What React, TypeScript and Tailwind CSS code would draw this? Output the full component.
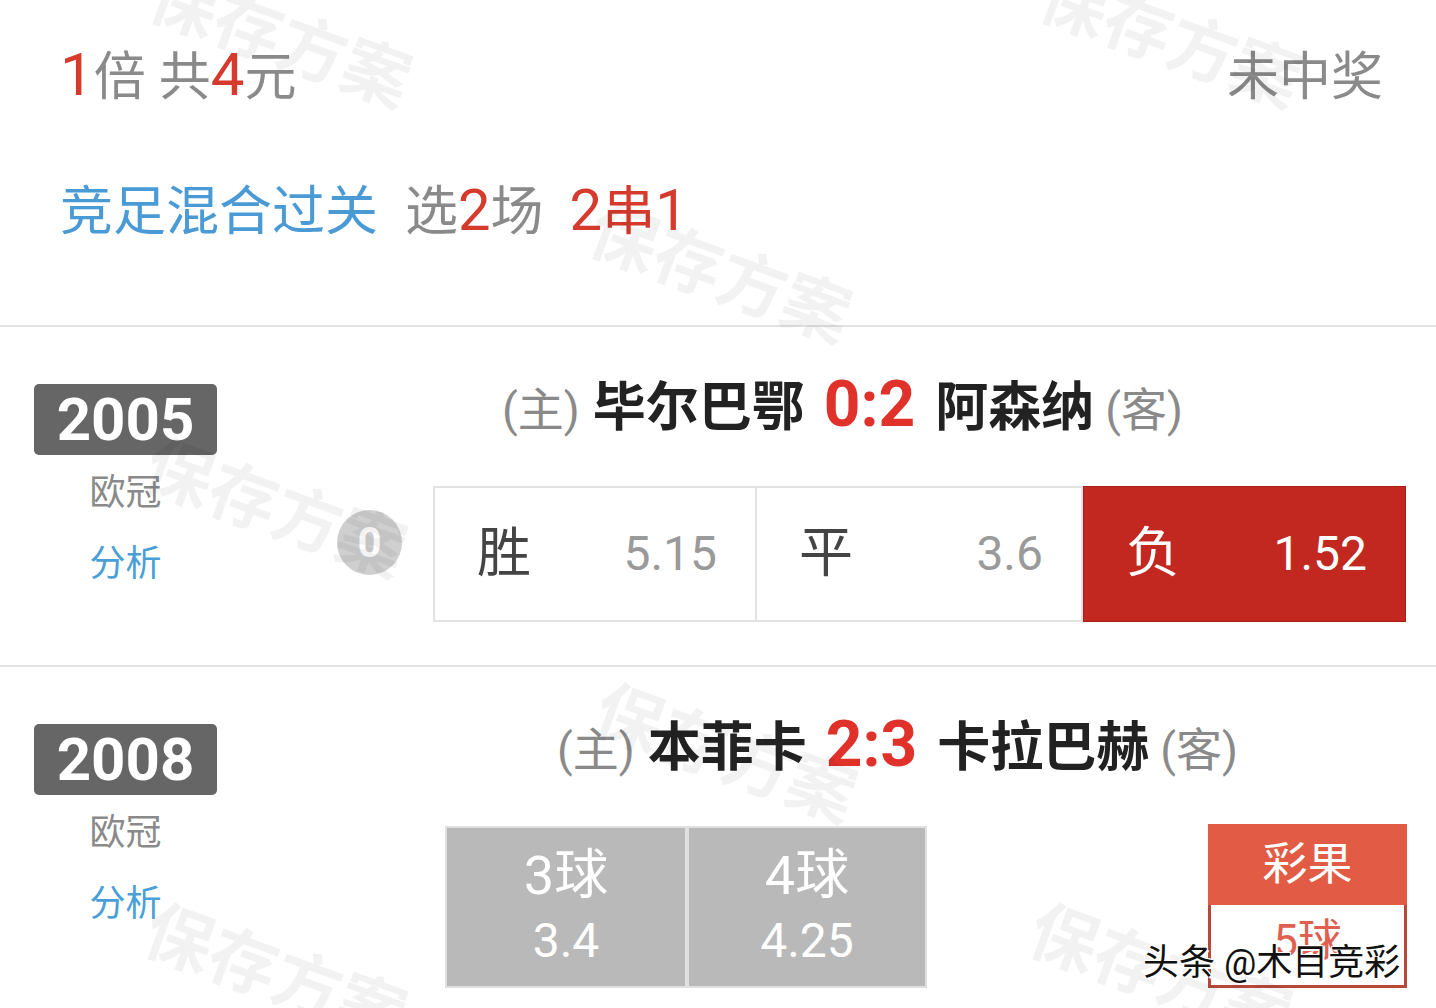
import React from 'react';

interface MatchProps {
  no: string;
  home: string;
  away: string;
  score: string;
}

function MatchInfo({ no }: { no: string }) {
  return (
    <div className="flex w-[183px] shrink-0 flex-col items-center pt-[57px]">
      <div className="flex h-[71px] w-[183px] items-center justify-center rounded-[5px] bg-[#666666] text-[60px] font-bold leading-none text-white">
        {no}
      </div>
      <div className="mt-[20px] text-[36px] leading-none text-[#8a8a8a]">欧冠</div>
      <div className="mt-[35px] text-[36px] leading-none text-[#4a9fd8]">分析</div>
    </div>
  );
}

function Teams({ home, away, score }: Omit<MatchProps, 'no'>) {
  return (
    <div className="flex items-baseline leading-none">
      <span className="text-[46px] text-[#8a8a8a]">(主)</span>
      <span className="ml-[13px] text-[53px] font-bold text-[#222222]">{home}</span>
      <span className="ml-[19px] text-[64px] font-bold text-[#e0322a]">{score}</span>
      <span className="ml-[20px] text-[53px] font-bold text-[#222222]">{away}</span>
      <span className="ml-[11px] text-[46px] text-[#8a8a8a]">(客)</span>
    </div>
  );
}

function OddsCell({ label, odds, className }: { label: string; odds: string; className: string }) {
  return (
    <div className={`flex items-center justify-between pl-[42px] pr-[38px] leading-none ${className}`}>
      <span className="text-[54px]">{label}</span>
      <span className="text-[48px]">{odds}</span>
    </div>
  );
}

function Watermark({ className }: { className: string }) {
  return (
    <span
      className={`pointer-events-none absolute rotate-[20deg] select-none whitespace-nowrap text-[68px] font-bold leading-none text-black/[0.05] ${className}`}
    >
      保存方案
    </span>
  );
}

export default function App() {
  return (
    <div className="relative h-[1008px] w-[1436px] overflow-hidden bg-white font-[family-name:Roboto,'Noto_Sans_CJK_SC',sans-serif]">
      {/* plan summary */}
      <div className="h-[325px] pl-[60px] pr-[53px] pt-[45px]">
        <div className="flex items-baseline justify-between leading-none">
          <span className="text-[52px] text-[#8a8a8a]">
            <span className="text-[60px] text-[#d63a2c]">1</span>倍 共<span className="text-[60px] text-[#d63a2c]">4</span>元
          </span>
          <span className="text-[52px] text-[#8a8a8a]">未中奖</span>
        </div>
        <div className="mt-[76px] flex items-baseline text-[53px] leading-none">
          <span className="text-[#4a9ad6]">竞足混合过关</span>
          <span className="ml-[27px] text-[#8a8a8a]">
            选<span className="text-[58px] text-[#d63a2c]">2</span>场
          </span>
          <span className="ml-[26px] text-[#d63a2c]">
            <span className="text-[58px]">2</span>串<span className="text-[58px]">1</span>
          </span>
        </div>
      </div>
      <div className="h-[2px] bg-[#e2e2e2]" />

      {/* match 2005 */}
      <div className="flex h-[338px] pl-[34px]">
        <MatchInfo no="2005" />
        <div className="flex flex-1 flex-col pt-[46px]">
          <div className="ml-[285px]">
            <Teams home="毕尔巴鄂" score="0:2" away="阿森纳" />
          </div>
          <div className="mt-[49px] flex items-start">
            <div className="ml-[120px] mt-[24px] flex h-[65px] w-[65px] items-center justify-center rounded-full bg-[#cfcfcf] text-[42px] font-bold leading-none text-white">
              0
            </div>
            <div className="ml-[31px] flex h-[136px] w-[973px] border-2 border-[#e3e3e3] bg-white">
              <OddsCell label="胜" odds="5.15" className="w-[322px] border-r-2 border-[#e3e3e3] text-[#444444] [&>span:last-child]:text-[#9a9a9a]" />
              <OddsCell label="平" odds="3.6" className="w-[326px] border-r-2 border-[#e3e3e3] text-[#444444] [&>span:last-child]:text-[#9a9a9a]" />
              <OddsCell label="负" odds="1.52" className="-my-[2px] -mr-[2px] flex-1 border border-[#a91f18] bg-[#c2281f] text-white" />
            </div>
          </div>
        </div>
      </div>
      <div className="h-[2px] bg-[#e2e2e2]" />

      {/* match 2008 */}
      <div className="flex h-[341px] pl-[34px]">
        <MatchInfo no="2008" />
        <div className="flex flex-1 flex-col pt-[46px]">
          <div className="ml-[340px]">
            <Teams home="本菲卡" score="2:3" away="卡拉巴赫" />
          </div>
          <div className="mt-[49px] flex items-start pr-[29px]">
            <div className="ml-[228px] flex h-[162px] w-[242px] flex-col items-center justify-center border-2 border-[#e0e0e0] bg-[#b9b9b9] leading-none text-white">
              <span className="text-[54px]">3球</span>
              <span className="mt-[14px] text-[48px]">3.4</span>
            </div>
            <div className="flex h-[162px] w-[240px] flex-col items-center justify-center border-2 border-[#e0e0e0] bg-[#b9b9b9] leading-none text-white">
              <span className="text-[54px]">4球</span>
              <span className="mt-[14px] text-[48px]">4.25</span>
            </div>
            <div className="-mt-[2px] ml-auto flex h-[164px] w-[199px] flex-col">
              <div className="flex h-[81px] items-center justify-center bg-[#e25b45] text-[45px] leading-none text-white">
                彩果
              </div>
              <div className="flex flex-1 justify-center border-x-[3px] border-b-[3px] border-[#b9483b] bg-white pt-[14px] text-[44px] leading-none text-[#e0604f]">
                5球
              </div>
            </div>
          </div>
        </div>
      </div>

      <Watermark className="left-[144px] top-[6px]" />
      <Watermark className="left-[1034px] top-[6px]" />
      <Watermark className="left-[584px] top-[241px]" />
      <Watermark className="left-[139px] top-[476px]" />
      <Watermark className="left-[589px] top-[721px]" />
      <Watermark className="left-[139px] top-[941px]" />
      <Watermark className="left-[1024px] top-[941px]" />

      {/* platform credit overlay */}
      <span className="absolute left-[1143px] top-[945px] whitespace-nowrap text-[36px] leading-none text-[#111111] [text-shadow:2px_2px_0_#ffffff,-1px_-1px_0_#ffffff,1px_-1px_0_#ffffff,-1px_1px_0_#ffffff]">
        头条 @木目竞彩
      </span>
    </div>
  );
}
